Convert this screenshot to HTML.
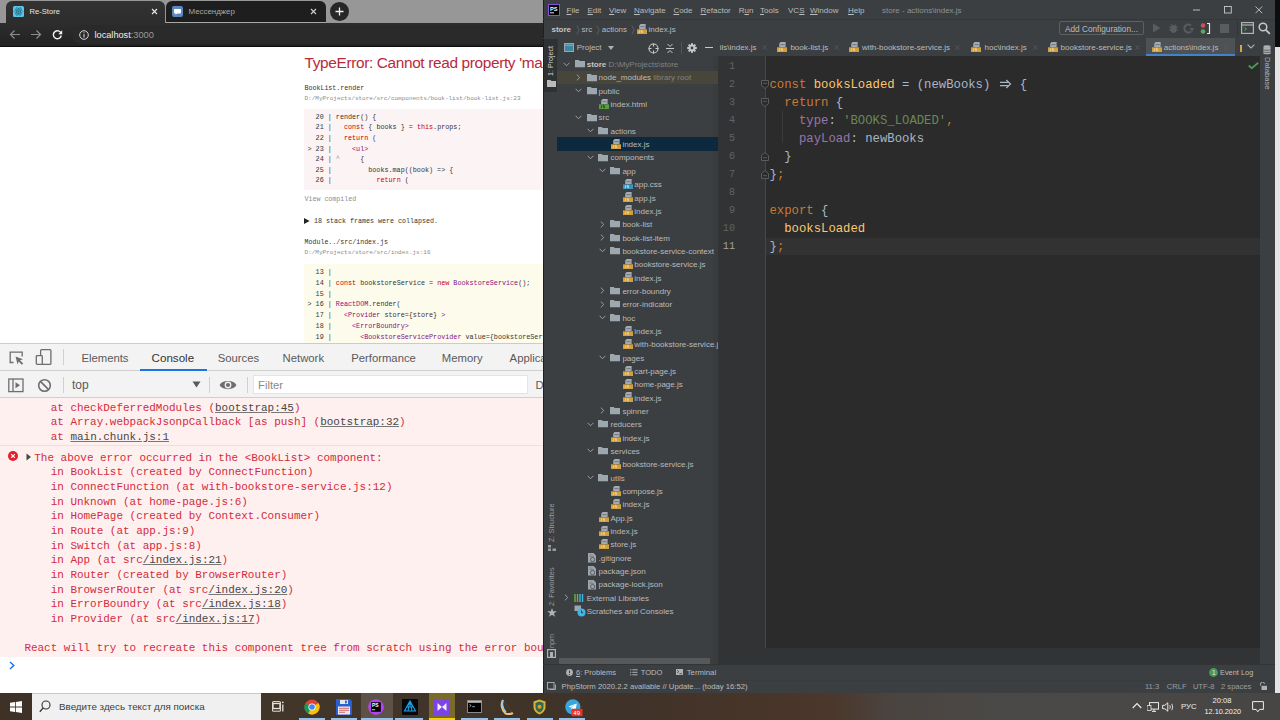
<!DOCTYPE html>
<html><head><meta charset="utf-8">
<style>
*{box-sizing:border-box;margin:0;padding:0}
html,body{width:1280px;height:720px;overflow:hidden;background:#222;font-family:"Liberation Sans",sans-serif}
.a{position:absolute;white-space:pre}
.m{font-family:"Liberation Mono",monospace}
#chrome{position:absolute;left:0;top:0;width:543px;height:693px;background:#fff;overflow:hidden}
#ide{position:absolute;left:543px;top:0;width:732px;height:693px;background:#3c3f41;overflow:hidden}
#rw{position:absolute;left:1275px;top:0;width:5px;height:693px;background:#e6e6e6}
#tb{position:absolute;left:0;top:693px;width:1280px;height:27px;background:#3d3226;overflow:hidden}
</style></head><body>
<div id="chrome">
  <!-- tab strip -->
  <div class="a" style="left:0;top:0;width:543px;height:23px;background:#979797"></div>
  <div class="a" style="left:6px;top:1px;width:159px;height:23px;background:linear-gradient(#333,#2c2c2c);border-radius:6px 6px 0 0"></div>
  <div class="a" style="left:166px;top:1px;width:160px;height:22px;background:#1e1e1e;border-radius:6px 6px 0 0;border-bottom:1px solid #a8a8a8"></div>
  <svg class="a" style="left:13px;top:6px" width="11" height="11" viewBox="0 0 11 11"><rect width="11" height="11" rx="1.5" fill="#5bc6e8"/><g fill="none" stroke="#1f6f8f" stroke-width=".7"><ellipse cx="5.5" cy="5.5" rx="4.3" ry="1.7"/><ellipse cx="5.5" cy="5.5" rx="4.3" ry="1.7" transform="rotate(60 5.5 5.5)"/><ellipse cx="5.5" cy="5.5" rx="4.3" ry="1.7" transform="rotate(120 5.5 5.5)"/></g><circle cx="5.5" cy="5.5" r=".9" fill="#1f6f8f"/></svg>
  <div class="a" style="left:29.5px;top:5.6px;font-size:7.6px;color:#e6e6e6;line-height:12px">Re-Store</div>
  <svg class="a" style="left:151px;top:8px" width="7" height="7" viewBox="0 0 7 7"><path d="M1 1L6 6M6 1L1 6" stroke="#e8e8e8" stroke-width="1.1"/></svg>
  <svg class="a" style="left:172px;top:6px" width="11" height="11" viewBox="0 0 11 11"><rect width="11" height="11" rx="2" fill="#5a87c0"/><path d="M2.6 3h5.8c.4 0 .6.2.6.6v3.2c0 .4-.2.6-.6.6H5.2L3.6 8.8V7.4h-1c-.4 0-.6-.2-.6-.6V3.6c0-.4.2-.6.6-.6z" fill="#fff"/></svg>
  <div class="a" style="left:188.5px;top:5.6px;font-size:7.9px;color:#a9a9a9;line-height:12px">Мессенджер</div>
  <svg class="a" style="left:310px;top:8px" width="7" height="7" viewBox="0 0 7 7"><path d="M1 1L6 6M6 1L1 6" stroke="#cfcfcf" stroke-width="1.1"/></svg>
  <svg class="a" style="left:329px;top:1px" width="21" height="21" viewBox="0 0 21 21"><circle cx="10.5" cy="10.5" r="9.5" fill="#262626"/><path d="M10.5 6.5v8M6.5 10.5h8" stroke="#eee" stroke-width="1.3"/></svg>
  <!-- toolbar -->
  <div class="a" style="left:0;top:23px;width:543px;height:24px;background:linear-gradient(#2d2d2d,#222);border-bottom:1px solid #0c0c0c"></div>
  <div class="a" style="left:72px;top:25px;width:480px;height:19px;background:#2a2a2a;border-radius:10px"></div>
  <svg class="a" style="left:9px;top:29px" width="12" height="11" viewBox="0 0 12 11"><path d="M11 5.5H1.5M5.5 1.5L1.5 5.5L5.5 9.5" fill="none" stroke="#8c8c8c" stroke-width="1.2"/></svg>
  <svg class="a" style="left:30px;top:29px" width="12" height="11" viewBox="0 0 12 11"><path d="M1 5.5H10.5M6.5 1.5L10.5 5.5L6.5 9.5" fill="none" stroke="#8c8c8c" stroke-width="1.2"/></svg>
  <svg class="a" style="left:52px;top:29px" width="11" height="11" viewBox="0 0 11 11"><path d="M9.2 4.6A4 4 0 1 0 9.3 6.5" fill="none" stroke="#f2f2f2" stroke-width="1.4"/><path d="M10.2 1.3V5.2H6.3Z" fill="#f2f2f2"/></svg>
  <svg class="a" style="left:79px;top:30px" width="10" height="10" viewBox="0 0 10 10"><circle cx="5" cy="5" r="4.3" fill="none" stroke="#d8d8d8" stroke-width="1"/><path d="M5 4.3v3.3" stroke="#d8d8d8" stroke-width="1.1"/><circle cx="5" cy="2.8" r=".6" fill="#d8d8d8"/></svg>
  <div class="a" style="left:94.5px;top:28.5px;font-size:9.2px;line-height:12px;color:#f0f0f0">localhost<span style="color:#9a9a9a">:3000</span></div>
  <!-- page -->
  <div class="a" style="left:0;top:47px;width:543px;height:296px;background:#fff"></div>
  <div class="a" style="left:304.5px;top:55.4px;font-size:15.4px;letter-spacing:-0.35px;line-height:16px;color:#b82a3c">TypeError: Cannot read property 'ma</div>
  <div class="a m" style="left:304.5px;top:82.5px;font-size:6.63px;line-height:10px;color:#333">BookList.render</div>
  <div class="a m" style="left:304.5px;top:94px;font-size:6px;line-height:10px;color:#878e91">D:/MyProjects/store/src/components/book-list/book-list.js:23</div>
  <div class="a" style="left:304px;top:109px;width:239px;height:81px;background:#fcf3f4"></div>
  <pre class="a m" style="left:307.5px;top:111.8px;font-size:6.75px;line-height:10.6px;color:#333">  20 | render() {
  21 |   <span style="color:#c80000">const</span> { books } = <span style="color:#c80000">this</span>.props;
  22 |   <span style="color:#c80000">return</span> (
&gt; 23 |     <span style="color:#881280">&lt;ul&gt;</span>
  24 | <span style="color:#999">^</span>     {
  25 |         books.map((book) =&gt; {
  26 |           <span style="color:#c80000">return</span> (</pre>
  <div class="a m" style="left:304.5px;top:193.7px;font-size:6.63px;line-height:10px;color:#878e91">View compiled</div>
  <svg class="a" style="left:303.8px;top:217.8px" width="6" height="6" viewBox="0 0 6 6"><path d="M0 0L5.6 3L0 6Z" fill="#222"/></svg>
  <div class="a m" style="left:314px;top:215.9px;font-size:6.68px;line-height:10px;color:#333">18 stack frames were collapsed.</div>
  <div class="a m" style="left:304.5px;top:237.3px;font-size:6.63px;line-height:10px;color:#333">Module../src/index.js</div>
  <div class="a m" style="left:304.5px;top:247.8px;font-size:6px;line-height:10px;color:#878e91">D:/MyProjects/store/src/index.js:16</div>
  <div class="a" style="left:304px;top:263.5px;width:239px;height:80px;background:#fdfbec"></div>
  <pre class="a m" style="left:307.5px;top:267.2px;font-size:6.75px;line-height:10.72px;color:#333">  13 |
  14 | <span style="color:#c80000">const</span> bookstoreService = <span style="color:#c80000">new</span> <span style="color:#881280">BookstoreService</span>();
  15 |
&gt; 16 | <span style="color:#881280">ReactDOM</span>.render(
  17 |   <span style="color:#881280">&lt;Provider</span> store={store} <span style="color:#881280">&gt;</span>
  18 |     <span style="color:#881280">&lt;ErrorBoundry&gt;</span>
  19 |       <span style="color:#881280">&lt;BookstoreServiceProvider</span> value={bookstoreService}&gt;</pre>
  <!-- devtools -->
  <div class="a" style="left:0;top:343px;width:543px;height:350px;background:#fff;border-top:1px solid #cbcbcb"></div>
  <div class="a" style="left:0;top:344px;width:543px;height:27px;background:#f3f3f3;border-bottom:1px solid #cfcfcf"></div>
  <div class="a" style="left:0;top:371px;width:543px;height:27px;background:#f3f3f3;border-bottom:1px solid #cfcfcf"></div>
  <svg class="a" style="left:9px;top:351px" width="16" height="14" viewBox="0 0 16 14"><path d="M4.5 11.5H1.2V1.2H13.2V5.5" fill="none" stroke="#6e6e6e" stroke-width="1.3"/><path d="M6.5 5.5L14 8.3L11 9.3L14.2 12.5L12.8 13.8L9.7 10.6L8.6 13.5Z" fill="#6e6e6e"/></svg>
  <svg class="a" style="left:35px;top:348px" width="18" height="18" viewBox="0 0 18 18"><rect x="5.6" y="1.6" width="10.3" height="14.8" rx="1" fill="none" stroke="#6e6e6e" stroke-width="1.3"/><rect x="1.3" y="7.6" width="6" height="8.8" rx=".8" fill="#f3f3f3" stroke="#6e6e6e" stroke-width="1.3"/></svg>
  <div class="a" style="left:62.5px;top:349px;width:1px;height:16px;background:#d0d0d0"></div>
  <div class="a" style="left:81.4px;top:351px;font-size:11.3px;line-height:14px;color:#5a5a5a">Elements</div>
  <div class="a" style="left:151.6px;top:351px;font-size:11.6px;line-height:14px;color:#333">Console</div>
  <div class="a" style="left:140px;top:369px;width:67px;height:2px;background:#1a73e8"></div>
  <div class="a" style="left:217.7px;top:351px;font-size:11.3px;line-height:14px;color:#5a5a5a">Sources</div>
  <div class="a" style="left:282.6px;top:351px;font-size:11.3px;line-height:14px;color:#5a5a5a">Network</div>
  <div class="a" style="left:351.2px;top:351px;font-size:11.3px;line-height:14px;color:#5a5a5a">Performance</div>
  <div class="a" style="left:441.8px;top:351px;font-size:11.3px;line-height:14px;color:#5a5a5a">Memory</div>
  <div class="a" style="left:509.6px;top:351px;font-size:11.3px;line-height:14px;color:#5a5a5a">Application</div>
  <svg class="a" style="left:8px;top:378px" width="16" height="15" viewBox="0 0 16 15"><rect x=".8" y="1" width="14.2" height="12.6" fill="none" stroke="#6e6e6e" stroke-width="1.3"/><path d="M5 1v12.6" stroke="#6e6e6e" stroke-width="1.3"/><path d="M7.5 4.3L12 7.3L7.5 10.3Z" fill="#6e6e6e"/></svg>
  <svg class="a" style="left:37px;top:378px" width="15" height="15" viewBox="0 0 15 15"><circle cx="7.5" cy="7.5" r="5.8" fill="none" stroke="#6e6e6e" stroke-width="1.6"/><path d="M3.6 3.6L11.4 11.4" stroke="#6e6e6e" stroke-width="1.6"/></svg>
  <div class="a" style="left:62.5px;top:377px;width:1px;height:16px;background:#d0d0d0"></div>
  <div class="a" style="left:72px;top:378px;font-size:12px;line-height:14px;color:#5a5a5a">top</div>
  <svg class="a" style="left:192px;top:381px" width="9" height="7" viewBox="0 0 9 7"><path d="M.5 .5H8.5L4.5 6.5Z" fill="#5a5a5a"/></svg>
  <div class="a" style="left:209px;top:377px;width:1px;height:16px;background:#d0d0d0"></div>
  <svg class="a" style="left:219px;top:378px" width="18" height="14" viewBox="0 0 18 14"><path d="M.6 7C3 1.5 15 1.5 17.4 7C15 12.5 3 12.5 .6 7Z" fill="#6e6e6e"/><circle cx="9" cy="7" r="3.4" fill="#f3f3f3"/><circle cx="9" cy="7" r="2.1" fill="#6e6e6e"/></svg>
  <div class="a" style="left:246.5px;top:377px;width:1px;height:16px;background:#d0d0d0"></div>
  <div class="a" style="left:253px;top:375px;width:274.5px;height:19px;background:#fff;border:1px solid #e4e4e4"></div>
  <div class="a" style="left:258px;top:378px;font-size:11.3px;line-height:14px;color:#8a8a8a">Filter</div>
  <div class="a" style="left:535.5px;top:378px;font-size:11.3px;line-height:14px;color:#5a5a5a">Default levels</div>
  <!-- console -->
  <div class="a" style="left:0;top:398px;width:543px;height:258.5px;background:#fff0f0"></div>
  <div class="a" style="left:0;top:445px;width:543px;height:1px;background:#ffd7d7"></div>
  <pre class="a m" style="left:24.4px;top:400.6px;font-size:10.96px;line-height:14.66px;color:#d22c3c">    at checkDeferredModules (<span style="color:#474747;text-decoration:underline;text-decoration-color:#777">bootstrap:45</span>)
    at Array.webpackJsonpCallback [as push] (<span style="color:#474747;text-decoration:underline;text-decoration-color:#777">bootstrap:32</span>)
    at <span style="color:#474747;text-decoration:underline;text-decoration-color:#777">main.chunk.js:1</span></pre>
  <svg class="a" style="left:7.5px;top:450.5px" width="10" height="10" viewBox="0 0 10 10"><circle cx="5" cy="5" r="5" fill="#e41e2b"/><path d="M3.1 3.1L6.9 6.9M6.9 3.1L3.1 6.9" stroke="#fff" stroke-width="1.2"/></svg>
  <svg class="a" style="left:25.5px;top:453px" width="6" height="8" viewBox="0 0 6 8"><path d="M.5 .5L5 4L.5 7.5Z" fill="#474747"/></svg>
  <pre class="a m" style="left:34.3px;top:450.6px;font-size:10.96px;line-height:14.66px;color:#d22c3c">The above error occurred in the &lt;BookList&gt; component:</pre>
  <pre class="a m" style="left:24.4px;top:465.3px;font-size:10.96px;line-height:14.66px;color:#d22c3c">    in BookList (created by ConnectFunction)
    in ConnectFunction (at with-bookstore-service.js:12)
    in Unknown (at home-page.js:6)
    in HomePage (created by Context.Consumer)
    in Route (at app.js:9)
    in Switch (at app.js:8)
    in App (at src<span style="color:#474747;text-decoration:underline;text-decoration-color:#777">/index.js:21</span>)
    in Router (created by BrowserRouter)
    in BrowserRouter (at src<span style="color:#474747;text-decoration:underline;text-decoration-color:#777">/index.js:20</span>)
    in ErrorBoundry (at src<span style="color:#474747;text-decoration:underline;text-decoration-color:#777">/index.js:18</span>)
    in Provider (at src<span style="color:#474747;text-decoration:underline;text-decoration-color:#777">/index.js:17</span>)

React will try to recreate this component tree from scratch using the error boundary you provided, ErrorBoundry.</pre>
  <svg class="a" style="left:9px;top:661px" width="6" height="9" viewBox="0 0 6 9"><path d="M1 1L4.8 4.5L1 8" fill="none" stroke="#1a73e8" stroke-width="1.4"/></svg>
</div>
<div class="a" style="left:543px;top:0px;width:732px;height:693px;background:#3c3f41"></div>
<div class="a" style="left:542.5px;top:0px;width:1.5px;height:693px;background:#1e1f20"></div>
<svg class="a" style="left:548px;top:4px" width="12" height="12" viewBox="0 0 12 12"><rect x=".5" y=".5" width="11" height="11" fill="#000" stroke="#8c4fd8" stroke-width="1"/><text x="2" y="6.6" font-family="Liberation Sans" font-weight="bold" font-size="5.6" fill="#fff">PS</text><rect x="2" y="8.4" width="4" height=".9" fill="#fff"/></svg>
<div class="a" style="left:566.5px;top:5.0px;font-size:8px;line-height:12px;color:#bbbbbb;"><span style="text-decoration:underline;text-underline-offset:1px">F</span>ile</div>
<div class="a" style="left:587.5px;top:5.0px;font-size:8px;line-height:12px;color:#bbbbbb;"><span style="text-decoration:underline;text-underline-offset:1px">E</span>dit</div>
<div class="a" style="left:609px;top:5.0px;font-size:8px;line-height:12px;color:#bbbbbb;"><span style="text-decoration:underline;text-underline-offset:1px">V</span>iew</div>
<div class="a" style="left:634px;top:5.0px;font-size:8px;line-height:12px;color:#bbbbbb;"><span style="text-decoration:underline;text-underline-offset:1px">N</span>avigate</div>
<div class="a" style="left:673.4px;top:5.0px;font-size:8px;line-height:12px;color:#bbbbbb;"><span style="text-decoration:underline;text-underline-offset:1px">C</span>ode</div>
<div class="a" style="left:700.5px;top:5.0px;font-size:8px;line-height:12px;color:#bbbbbb;"><span style="text-decoration:underline;text-underline-offset:1px">R</span>efactor</div>
<div class="a" style="left:738.7px;top:5.0px;font-size:8px;line-height:12px;color:#bbbbbb;">R<span style="text-decoration:underline;text-underline-offset:1px">u</span>n</div>
<div class="a" style="left:760px;top:5.0px;font-size:8px;line-height:12px;color:#bbbbbb;"><span style="text-decoration:underline;text-underline-offset:1px">T</span>ools</div>
<div class="a" style="left:788px;top:5.0px;font-size:8px;line-height:12px;color:#bbbbbb;">VC<span style="text-decoration:underline;text-underline-offset:1px">S</span></div>
<div class="a" style="left:810px;top:5.0px;font-size:8px;line-height:12px;color:#bbbbbb;"><span style="text-decoration:underline;text-underline-offset:1px">W</span>indow</div>
<div class="a" style="left:848px;top:5.0px;font-size:8px;line-height:12px;color:#bbbbbb;"><span style="text-decoration:underline;text-underline-offset:1px">H</span>elp</div>
<div class="a" style="left:882px;top:5.0px;font-size:8px;line-height:12px;color:#8e9194;">store - actions\index.js</div>
<svg class="a" style="left:1193px;top:8.5px" width="8" height="2" viewBox="0 0 8 2"><path d="M0 1H7" stroke="#c8c8c8" stroke-width=".9"/></svg>
<svg class="a" style="left:1224px;top:6px" width="8" height="8" viewBox="0 0 8 8"><rect x=".5" y=".5" width="6.8" height="6.5" fill="none" stroke="#c8c8c8" stroke-width=".9"/></svg>
<svg class="a" style="left:1255px;top:5.5px" width="8" height="8" viewBox="0 0 8 8"><path d="M.5 .5L7.2 7.2M7.2 .5L.5 7.2" stroke="#c8c8c8" stroke-width=".9"/></svg>
<div class="a" style="left:543px;top:19px;width:732px;height:1px;background:#343638"></div>
<div class="a" style="left:551.5px;top:24.0px;font-size:8px;line-height:12px;color:#bbbbbb;font-weight:bold;color:#c6c6c6">store</div>
<svg class="a" style="left:575.5px;top:24.5px" width="4" height="10" viewBox="0 0 4 10"><path d="M.8 .5L3.2 5L.8 9.5" fill="none" stroke="#5c5f61" stroke-width=".9"/></svg>
<div class="a" style="left:581.5px;top:23.9px;font-size:8px;line-height:12px;color:#bbbbbb;">src</div>
<svg class="a" style="left:595.5px;top:24.5px" width="4" height="10" viewBox="0 0 4 10"><path d="M.8 .5L3.2 5L.8 9.5" fill="none" stroke="#5c5f61" stroke-width=".9"/></svg>
<div class="a" style="left:601.7px;top:23.9px;font-size:8px;line-height:12px;color:#bbbbbb;">actions</div>
<svg class="a" style="left:630.5px;top:24.5px" width="4" height="10" viewBox="0 0 4 10"><path d="M.8 .5L3.2 5L.8 9.5" fill="none" stroke="#5c5f61" stroke-width=".9"/></svg>
<svg class="a" style="left:636.5px;top:23.8px" width="10" height="10" viewBox="0 0 10 10"><path d="M3.6 0H8.6V4.9H2.2V1.4Z" fill="#a4abb2"/><path d="M3.4 2.6H7.6" stroke="#5b6167" stroke-width=".7"/><rect x="0" y="5.3" width="10" height="4.7" fill="#d29f3c"/><path d="M2.6 6.3v2.4h-1M5.6 6.3h-1.4v1.2h1.4v1.2H4.2" stroke="#ecd9a4" stroke-width=".8" fill="none"/></svg>
<div class="a" style="left:648.5px;top:23.9px;font-size:8px;line-height:12px;color:#bbbbbb;">index.js</div>
<div class="a" style="left:1059.3px;top:21.2px;width:84.5px;height:14.2px;border:1px solid #5e6060;border-radius:2px;background:#3c3f41"></div>
<div class="a" style="left:1065px;top:23.5px;font-size:8.26px;line-height:12px;color:#bbbbbb;">Add Configuration...</div>
<svg class="a" style="left:1152px;top:23px" width="9" height="10" viewBox="0 0 9 10"><path d="M1 .5L8.5 5L1 9.5Z" fill="#5a5d5f"/></svg>
<svg class="a" style="left:1168px;top:23px" width="11" height="11" viewBox="0 0 11 11"><ellipse cx="5.5" cy="6" rx="3.2" ry="4" fill="#5a5d5f"/><path d="M1 4H10M1 7H10M3 1L4 2.5M8 1L7 2.5" stroke="#5a5d5f" stroke-width=".9"/></svg>
<svg class="a" style="left:1183px;top:23px" width="12" height="11" viewBox="0 0 12 11"><path d="M8 2.5A4 4 0 1 0 8 8.5" fill="none" stroke="#5a5d5f" stroke-width="2"/><path d="M6.5 5H11L9 9Z" fill="#5a5d5f"/></svg>
<svg class="a" style="left:1199px;top:22px" width="12" height="13" viewBox="0 0 12 13"><circle cx="4" cy="3.5" r="2.3" fill="#c75450"/><circle cx="4" cy="9.5" r="2.3" fill="#59a869"/><path d="M8 1.5H10.5V11.5H8" fill="none" stroke="#e8e8e8" stroke-width="1.2"/></svg>
<div class="a" style="left:1220px;top:24px;width:9px;height:9px;background:#5a5d5f"></div>
<div class="a" style="left:1237px;top:21px;width:1px;height:15px;background:#323436"></div>
<svg class="a" style="left:1241px;top:22px" width="13" height="12" viewBox="0 0 13 12"><rect x=".6" y=".6" width="11.8" height="10.8" fill="none" stroke="#afb1b3" stroke-width="1.2"/><path d="M.6 3H12.4" stroke="#afb1b3" stroke-width="1.2"/><path d="M3.5 5.5L5.5 7L3.5 8.5" fill="none" stroke="#59a869" stroke-width="1"/></svg>
<svg class="a" style="left:1258px;top:22px" width="13" height="13" viewBox="0 0 13 13"><circle cx="5" cy="5" r="3.8" fill="none" stroke="#c8c8c8" stroke-width="1.5"/><path d="M7.8 7.8L11.8 11.8" stroke="#c8c8c8" stroke-width="1.8"/></svg>
<div class="a" style="left:543px;top:37.5px;width:732px;height:1px;background:#3a3c3e"></div>
<div class="a" style="left:544px;top:38px;width:13px;height:626px;background:#3c3f41"></div>
<div class="a" style="left:557px;top:38px;width:0.8px;height:626px;background:#323436"></div>
<div class="a" style="left:544px;top:38.5px;width:13px;height:53.5px;background:#2f3133"></div>
<div class="a" style="left:545.3px;top:76px;width:40px;height:12px;transform-origin:0 0;transform:rotate(-90deg);font-size:7.1px;line-height:12px;color:#d2d2d2">1: Project</div>
<svg class="a" style="left:547px;top:80px" width="9" height="7" viewBox="0 0 9 7"><path d="M0 0H3.5L4.5 1H9V7H0Z" fill="#bbbbbb"/></svg>
<div class="a" style="left:546px;top:542px;width:50px;height:12px;transform-origin:0 0;transform:rotate(-90deg);font-size:7.4px;line-height:12px;color:#9a9da0">Z: Structure</div>
<svg class="a" style="left:548px;top:545px" width="9" height="6" viewBox="0 0 9 6"><rect x="0" y="0" width="3" height="2.5" fill="#9a9da0"/><rect x="0" y="3.5" width="3" height="2.5" fill="#9a9da0"/><rect x="4.5" y="3.5" width="3.5" height="2.5" fill="#9a9da0"/></svg>
<div class="a" style="left:546px;top:606px;width:50px;height:12px;transform-origin:0 0;transform:rotate(-90deg);font-size:7.4px;line-height:12px;color:#9a9da0">2: Favorites</div>
<svg class="a" style="left:547px;top:608px" width="10" height="9" viewBox="0 0 10 9"><path d="M5 0L6.2 3.3H9.8L6.9 5.4L8 8.8L5 6.7L2 8.8L3.1 5.4L.2 3.3H3.8Z" fill="#afb1b3"/></svg>
<div class="a" style="left:546px;top:648px;width:20px;height:12px;transform-origin:0 0;transform:rotate(-90deg);font-size:7.2px;line-height:12px;color:#9a9da0">npm</div>
<svg class="a" style="left:547px;top:649px" width="9" height="9" viewBox="0 0 9 9"><rect x=".6" y=".6" width="7.8" height="7.8" fill="none" stroke="#afb1b3" stroke-width="1.2"/><rect x="3" y="3" width="3" height="5" fill="#afb1b3"/></svg>
<svg class="a" style="left:564px;top:43px" width="10" height="9" viewBox="0 0 10 9"><rect x=".5" y=".5" width="9" height="8" fill="#3e86a0" stroke="#9aa7b0" stroke-width="1"/><path d="M.5 2.3H9.5" stroke="#9aa7b0" stroke-width="1"/></svg>
<div class="a" style="left:576.7px;top:42.2px;font-size:8px;line-height:12px;color:#bbbbbb;">Project</div>
<svg class="a" style="left:607.5px;top:46px" width="6" height="4" viewBox="0 0 6 4"><path d="M0 0H6L3 4Z" fill="#afb1b3"/></svg>
<svg class="a" style="left:647.5px;top:42.5px" width="11" height="11" viewBox="0 0 11 11"><circle cx="5.5" cy="5.5" r="4.5" fill="none" stroke="#c8c8c8" stroke-width="1.1"/><path d="M5.5 .5V3.5M5.5 7.5V10.5M.5 5.5H3.5M7.5 5.5H10.5" stroke="#c8c8c8" stroke-width="1.1"/></svg>
<svg class="a" style="left:666px;top:42.5px" width="8" height="11" viewBox="0 0 8 11"><path d="M0 5.5H8" stroke="#c8c8c8" stroke-width="1"/><path d="M1.5 1L4 3.5L6.5 1M1.5 10L4 7.5L6.5 10" fill="none" stroke="#c8c8c8" stroke-width="1"/></svg>
<div class="a" style="left:680.5px;top:42px;width:1px;height:12px;background:#515658"></div>
<svg class="a" style="left:687px;top:42.5px" width="10" height="10" viewBox="0 0 10 10"><g fill="#c8c8c8"><circle cx="5" cy="5" r="3.4"/><rect x="4" y=".2" width="2" height="9.6"/><rect x=".2" y="4" width="9.6" height="2"/><rect x="4" y=".2" width="2" height="9.6" transform="rotate(45 5 5)"/><rect x="4" y=".2" width="2" height="9.6" transform="rotate(-45 5 5)"/></g><circle cx="5" cy="5" r="1.4" fill="#3c3f41"/></svg>
<div class="a" style="left:705px;top:47px;width:8px;height:1.2px;background:#c8c8c8"></div>
<div class="a" style="left:718px;top:38px;width:541px;height:18px;background:#3c3f41"></div>
<div class="a" style="left:1145.8px;top:38px;width:89.2px;height:18px;background:#4e5254"></div>
<div class="a" style="left:1145.8px;top:54.3px;width:89.2px;height:1.7px;background:#4083c9"></div>
<div class="a" style="left:719.7px;top:42.2px;font-size:8px;line-height:12px;color:#bbbbbb;">ils\index.js</div>
<svg class="a" style="left:761.9px;top:45px" width="5" height="5" viewBox="0 0 5 5"><path d="M.5 .5L4.5 4.5M4.5 .5L.5 4.5" stroke="#5a5d60" stroke-width=".8"/></svg>
<svg class="a" style="left:777px;top:41.5px" width="10" height="10" viewBox="0 0 10 10"><path d="M3.6 0H8.6V4.9H2.2V1.4Z" fill="#a4abb2"/><path d="M3.4 2.6H7.6" stroke="#5b6167" stroke-width=".7"/><rect x="0" y="5.3" width="10" height="4.7" fill="#d29f3c"/><path d="M2.6 6.3v2.4h-1M5.6 6.3h-1.4v1.2h1.4v1.2H4.2" stroke="#ecd9a4" stroke-width=".8" fill="none"/></svg>
<div class="a" style="left:790.4px;top:42.2px;font-size:8px;line-height:12px;color:#bbbbbb;">book-list.js</div>
<svg class="a" style="left:834.1px;top:45px" width="5" height="5" viewBox="0 0 5 5"><path d="M.5 .5L4.5 4.5M4.5 .5L.5 4.5" stroke="#5a5d60" stroke-width=".8"/></svg>
<svg class="a" style="left:849px;top:41.5px" width="10" height="10" viewBox="0 0 10 10"><path d="M3.6 0H8.6V4.9H2.2V1.4Z" fill="#a4abb2"/><path d="M3.4 2.6H7.6" stroke="#5b6167" stroke-width=".7"/><rect x="0" y="5.3" width="10" height="4.7" fill="#d29f3c"/><path d="M2.6 6.3v2.4h-1M5.6 6.3h-1.4v1.2h1.4v1.2H4.2" stroke="#ecd9a4" stroke-width=".8" fill="none"/></svg>
<div class="a" style="left:862.1px;top:42.2px;font-size:8px;line-height:12px;color:#bbbbbb;">with-bookstore-service.js</div>
<svg class="a" style="left:955.3px;top:45px" width="5" height="5" viewBox="0 0 5 5"><path d="M.5 .5L4.5 4.5M4.5 .5L.5 4.5" stroke="#5a5d60" stroke-width=".8"/></svg>
<svg class="a" style="left:971px;top:41.5px" width="10" height="10" viewBox="0 0 10 10"><path d="M3.6 0H8.6V4.9H2.2V1.4Z" fill="#a4abb2"/><path d="M3.4 2.6H7.6" stroke="#5b6167" stroke-width=".7"/><rect x="0" y="5.3" width="10" height="4.7" fill="#d29f3c"/><path d="M2.6 6.3v2.4h-1M5.6 6.3h-1.4v1.2h1.4v1.2H4.2" stroke="#ecd9a4" stroke-width=".8" fill="none"/></svg>
<div class="a" style="left:984.5px;top:42.2px;font-size:8px;line-height:12px;color:#bbbbbb;">hoc\index.js</div>
<svg class="a" style="left:1032.5px;top:45px" width="5" height="5" viewBox="0 0 5 5"><path d="M.5 .5L4.5 4.5M4.5 .5L.5 4.5" stroke="#5a5d60" stroke-width=".8"/></svg>
<svg class="a" style="left:1048.3px;top:41.5px" width="10" height="10" viewBox="0 0 10 10"><path d="M3.6 0H8.6V4.9H2.2V1.4Z" fill="#a4abb2"/><path d="M3.4 2.6H7.6" stroke="#5b6167" stroke-width=".7"/><rect x="0" y="5.3" width="10" height="4.7" fill="#d29f3c"/><path d="M2.6 6.3v2.4h-1M5.6 6.3h-1.4v1.2h1.4v1.2H4.2" stroke="#ecd9a4" stroke-width=".8" fill="none"/></svg>
<div class="a" style="left:1060.6px;top:42.2px;font-size:8px;line-height:12px;color:#bbbbbb;">bookstore-service.js</div>
<svg class="a" style="left:1135.0px;top:45px" width="5" height="5" viewBox="0 0 5 5"><path d="M.5 .5L4.5 4.5M4.5 .5L.5 4.5" stroke="#5a5d60" stroke-width=".8"/></svg>
<svg class="a" style="left:1151.8px;top:41.5px" width="10" height="10" viewBox="0 0 10 10"><path d="M3.6 0H8.6V4.9H2.2V1.4Z" fill="#a4abb2"/><path d="M3.4 2.6H7.6" stroke="#5b6167" stroke-width=".7"/><rect x="0" y="5.3" width="10" height="4.7" fill="#d29f3c"/><path d="M2.6 6.3v2.4h-1M5.6 6.3h-1.4v1.2h1.4v1.2H4.2" stroke="#ecd9a4" stroke-width=".8" fill="none"/></svg>
<div class="a" style="left:1163.7px;top:42.2px;font-size:8px;line-height:12px;color:#bbbbbb;">actions\index.js</div>
<svg class="a" style="left:1224.1px;top:45px" width="5" height="5" viewBox="0 0 5 5"><path d="M.5 .5L4.5 4.5M4.5 .5L.5 4.5" stroke="#5a5d60" stroke-width=".8"/></svg>
<div class="a" style="left:1240px;top:45px;width:1.6px;height:7px;background:#d9a343"></div>
<svg class="a" style="left:1247px;top:44px" width="8" height="5" viewBox="0 0 8 5"><path d="M.6 .6L4 4L7.4 .6" fill="none" stroke="#afb1b3" stroke-width="1.1"/></svg>
<div class="a" style="left:718px;top:56px;width:48px;height:592px;background:#313335"></div>
<div class="a" style="left:764.5px;top:56px;width:1px;height:592px;background:#45474a"></div>
<div class="a" style="left:766px;top:56px;width:493.5px;height:592px;background:#2b2b2b"></div>
<div class="a" style="left:766px;top:237.5px;width:493.5px;height:17px;background:#323232"></div>
<div class="a" style="left:718px;top:648px;width:541.5px;height:16px;background:#313335"></div>
<pre class="a m" style="left:769.5px;top:58px;font-size:12.27px;line-height:18px;color:#a9b7c6">

<span style="color:#cc7832">const</span> <span style="color:#ffc66d">booksLoaded</span> = (newBooks) <svg style="display:inline-block;vertical-align:-1px" width="14.72" height="10" viewBox="0 0 14.72 10"><path d="M2 3.3H10.5M2 6.7H10.5" stroke="#a9b7c6" stroke-width="1.2"/><path d="M8.3 1L12.5 5L8.3 9" fill="none" stroke="#a9b7c6" stroke-width="1.2"/></svg> {
  <span style="color:#cc7832">return</span> {
    <span style="color:#9876aa">type</span>: <span style="color:#6a8759">'BOOKS_LOADED'</span><span style="color:#cc7832">,</span>
    <span style="color:#9876aa">payLoad</span>: newBooks
  }
}<span style="color:#cc7832">;</span>

<span style="color:#cc7832">export</span> {
  <span style="color:#ffc66d">booksLoaded</span>
}<span style="color:#cc7832">;</span></pre>
<pre class="a m" style="left:699px;top:58.3px;width:36px;text-align:right;font-size:10.2px;line-height:18px;color:#606366">1
2
3
4
5
6
7
8
9
10
<span style="color:#a4a3a3">11</span></pre>
<svg class="a" style="left:761px;top:79.5px" width="8" height="9" viewBox="0 0 8 9"><path d="M.5 .5H7.5V5.5L4 8.5L.5 5.5Z" fill="#2b2b2b" stroke="#66686a" stroke-width=".8"/><path d="M2 3.3H6" stroke="#66686a" stroke-width=".8"/></svg>
<svg class="a" style="left:761px;top:97.5px" width="8" height="9" viewBox="0 0 8 9"><path d="M.5 .5H7.5V5.5L4 8.5L.5 5.5Z" fill="#2b2b2b" stroke="#66686a" stroke-width=".8"/><path d="M2 3.3H6" stroke="#66686a" stroke-width=".8"/></svg>
<svg class="a" style="left:761px;top:151.5px" width="8" height="9" viewBox="0 0 8 9"><path d="M.5 8.5H7.5V3.5L4 .5L.5 3.5Z" fill="#2b2b2b" stroke="#66686a" stroke-width=".8"/><path d="M2 5.7H6" stroke="#66686a" stroke-width=".8"/></svg>
<svg class="a" style="left:761px;top:169.5px" width="8" height="9" viewBox="0 0 8 9"><path d="M.5 8.5H7.5V3.5L4 .5L.5 3.5Z" fill="#2b2b2b" stroke="#66686a" stroke-width=".8"/><path d="M2 5.7H6" stroke="#66686a" stroke-width=".8"/></svg>
<div class="a" style="left:782px;top:111px;width:0.8px;height:32px;background:#3b3b3b"></div>
<svg class="a" style="left:1248px;top:62px" width="11" height="7" viewBox="0 0 11 7"><path d="M.8 3.5L3.8 6.2L10.2 .8" fill="none" stroke="#499c54" stroke-width="1.8"/></svg>
<div class="a" style="left:1259.5px;top:38px;width:0.8px;height:626px;background:#323436"></div>
<div class="a" style="left:1260.3px;top:38px;width:14.7px;height:626px;background:#3c3f41"></div>
<svg class="a" style="left:1263px;top:45px" width="8" height="10" viewBox="0 0 8 10"><ellipse cx="4" cy="1.6" rx="3.6" ry="1.4" fill="#afb1b3"/><path d="M.4 2.2V8.6C.4 9.6 7.6 9.6 7.6 8.6V2.2" fill="#afb1b3"/><path d="M.4 4.5C.4 5.5 7.6 5.5 7.6 4.5M.4 6.7C.4 7.7 7.6 7.7 7.6 6.7" fill="none" stroke="#3c3f41" stroke-width=".7"/></svg>
<div class="a" style="left:1273px;top:57px;width:40px;height:12px;transform-origin:0 0;transform:rotate(90deg);font-size:7.6px;line-height:12px;color:#afb1b3">Database</div>
<div class="a" style="left:558.8px;top:658px;width:151px;height:5.5px;background:#4f5254;border-radius:1px"></div>
<div class="a" style="left:543px;top:664px;width:732px;height:0.8px;background:#323436"></div>
<svg class="a" style="left:565.5px;top:668.8px" width="7" height="7" viewBox="0 0 7 7"><circle cx="3.5" cy="3.5" r="3.4" fill="#afb1b3"/><path d="M3.5 1.5V4" stroke="#3c3f41" stroke-width="1"/><circle cx="3.5" cy="5.3" r=".6" fill="#3c3f41"/></svg>
<div class="a" style="left:576px;top:667.0px;font-size:7.5px;line-height:12px;color:#bbbbbb;"><span style="text-decoration:underline">6</span>: Problems</div>
<svg class="a" style="left:630px;top:669px" width="7.5" height="7" viewBox="0 0 7.5 7"><path d="M0 .8H1.3M0 3.3H1.3M0 5.8H1.3M2.3 .8H7.5M2.3 3.3H7.5M2.3 5.8H7.5" stroke="#afb1b3" stroke-width="1"/></svg>
<div class="a" style="left:640.7px;top:667.0px;font-size:7.6px;line-height:12px;color:#bbbbbb;">TODO</div>
<svg class="a" style="left:675.7px;top:669.3px" width="7.6" height="6" viewBox="0 0 7.6 6"><rect x="0" y="0" width="7.6" height="6" fill="#afb1b3"/><path d="M1.2 1.3L2.8 2.6L1.2 3.9M3.4 4.7H6" fill="none" stroke="#3c3f41" stroke-width=".8"/></svg>
<div class="a" style="left:686.7px;top:667.0px;font-size:7.8px;line-height:12px;color:#bbbbbb;">Terminal</div>
<svg class="a" style="left:1208.5px;top:668.3px" width="9" height="9" viewBox="0 0 9 9"><circle cx="4.5" cy="4.5" r="4.4" fill="#499c54"/><text x="2.9" y="7" font-family="Liberation Sans" font-size="6.5" fill="#e8e8e8">1</text></svg>
<div class="a" style="left:1220px;top:667.0px;font-size:7.4px;line-height:12px;color:#bbbbbb;">Event Log</div>
<div class="a" style="left:543px;top:679.5px;width:732px;height:0.6px;background:#393b3d"></div>
<svg class="a" style="left:546.5px;top:682px" width="9" height="8" viewBox="0 0 9 8"><rect x=".5" y=".5" width="6.5" height="6.5" fill="none" stroke="#afb1b3" stroke-width=".9"/><path d="M2.5 7.5H8.5V2.5" fill="none" stroke="#afb1b3" stroke-width=".9"/></svg>
<div class="a" style="left:561.6px;top:680.6px;font-size:7.7px;line-height:12px;color:#bbbbbb;">PhpStorm 2020.2.2 available // Update... (today 16:52)</div>
<div class="a" style="left:1144.9px;top:680.9px;font-size:7.6px;line-height:12px;color:#9a9da0;">11:3</div>
<div class="a" style="left:1166.7px;top:680.9px;font-size:7.6px;line-height:12px;color:#9a9da0;">CRLF</div>
<div class="a" style="left:1192.9px;top:680.9px;font-size:7.6px;line-height:12px;color:#9a9da0;">UTF-8</div>
<div class="a" style="left:1221px;top:680.9px;font-size:7.6px;line-height:12px;color:#9a9da0;">2 spaces</div>
<svg class="a" style="left:1258.5px;top:682px" width="8" height="8" viewBox="0 0 8 8"><path d="M1.5 3.5V2A2 2 0 0 1 5.5 2" fill="none" stroke="#afb1b3" stroke-width="1"/><rect x="2.5" y="3.8" width="5.5" height="4.2" fill="#afb1b3"/></svg>
<div class="a" style="left:0;top:0;width:718px;height:664px;overflow:hidden"><div class="a" style="left:557px;top:56px;width:161px;height:608px;background:#3c3f41"></div>
<div class="a" style="left:713px;top:56px;width:5px;height:608px;background:#393b3d"></div>
<div class="a" style="left:558.8px;top:657.5px;width:151px;height:6px;background:#56585a;border-radius:1px"></div>
<div class="a" style="left:557px;top:70.74px;width:161px;height:13.3px;background:#48463b"></div>
<div class="a" style="left:557px;top:137.04px;width:161px;height:13.6px;background:#0d293e"></div>
<svg class="a" style="left:562.9px;top:61.5px" width="7" height="5" viewBox="0 0 7 5"><path d="M.6 .8L3.5 3.8L6.4 .8" fill="none" stroke="#9a9da0" stroke-width="1"/></svg>
<svg class="a" style="left:574.6px;top:60.2px" width="10" height="8" viewBox="0 0 10 8"><path d="M0 0H3.8L4.8 1.1H10V7.2H0Z" fill="#9ca7ae"/></svg>
<div class="a" style="left:586.7px;top:58.1px;font-size:8px;line-height:13.34px;color:#bbbbbb"><b style="color:#c4c4c4">store</b> <span style="color:#7f8285">D:\MyProjects\store</span></div>
<svg class="a" style="left:575.8px;top:73.84px" width="5" height="7" viewBox="0 0 5 7"><path d="M.8 .6L3.8 3.5L.8 6.4" fill="none" stroke="#9a9da0" stroke-width="1"/></svg>
<svg class="a" style="left:586.5px;top:73.54px" width="10" height="8" viewBox="0 0 10 8"><path d="M0 0H3.8L4.8 1.1H10V7.2H0Z" fill="#9ca7ae"/></svg>
<div class="a" style="left:598.6px;top:71.44px;font-size:8px;line-height:13.34px;color:#bbbbbb">node_modules <span style="color:#7f8285">library root</span></div>
<svg class="a" style="left:574.8px;top:88.18px" width="7" height="5" viewBox="0 0 7 5"><path d="M.6 .8L3.5 3.8L6.4 .8" fill="none" stroke="#9a9da0" stroke-width="1"/></svg>
<svg class="a" style="left:586.5px;top:86.88px" width="10" height="8" viewBox="0 0 10 8"><path d="M0 0H3.8L4.8 1.1H10V7.2H0Z" fill="#9ca7ae"/></svg>
<div class="a" style="left:598.6px;top:84.78px;font-size:8px;line-height:13.34px;color:#bbbbbb">public</div>
<svg class="a" style="left:599.1px;top:98.72px" width="10" height="10" viewBox="0 0 10 10"><path d="M3.6 0H8.6V4.9H2.2V1.4Z" fill="#a4abb2"/><path d="M3.4 2.6H7.6" stroke="#5b6167" stroke-width=".7"/><rect x="0" y="5.3" width="10" height="4.7" fill="#5a9f3e"/><path d="M2.6 6.3v2.4h-1M5.6 6.3h-1.4v1.2h1.4v1.2H4.2" stroke="#2d3b26" stroke-width=".8" fill="none"/></svg>
<div class="a" style="left:610.5px;top:98.12px;font-size:8px;line-height:13.34px;color:#bbbbbb">index.html</div>
<svg class="a" style="left:574.8px;top:114.86px" width="7" height="5" viewBox="0 0 7 5"><path d="M.6 .8L3.5 3.8L6.4 .8" fill="none" stroke="#9a9da0" stroke-width="1"/></svg>
<svg class="a" style="left:586.5px;top:113.56px" width="10" height="8" viewBox="0 0 10 8"><path d="M0 0H3.8L4.8 1.1H10V7.2H0Z" fill="#9ca7ae"/></svg>
<div class="a" style="left:598.6px;top:111.46px;font-size:8px;line-height:13.34px;color:#bbbbbb">src</div>
<svg class="a" style="left:586.7px;top:128.2px" width="7" height="5" viewBox="0 0 7 5"><path d="M.6 .8L3.5 3.8L6.4 .8" fill="none" stroke="#9a9da0" stroke-width="1"/></svg>
<svg class="a" style="left:598.4px;top:126.9px" width="10" height="8" viewBox="0 0 10 8"><path d="M0 0H3.8L4.8 1.1H10V7.2H0Z" fill="#9ca7ae"/></svg>
<div class="a" style="left:610.5px;top:124.8px;font-size:8px;line-height:13.34px;color:#bbbbbb">actions</div>
<svg class="a" style="left:611.0px;top:138.74px" width="10" height="10" viewBox="0 0 10 10"><path d="M3.6 0H8.6V4.9H2.2V1.4Z" fill="#a4abb2"/><path d="M3.4 2.6H7.6" stroke="#5b6167" stroke-width=".7"/><rect x="0" y="5.3" width="10" height="4.7" fill="#d29f3c"/><path d="M2.6 6.3v2.4h-1M5.6 6.3h-1.4v1.2h1.4v1.2H4.2" stroke="#ecd9a4" stroke-width=".8" fill="none"/></svg>
<div class="a" style="left:622.4px;top:138.14px;font-size:8px;line-height:13.34px;color:#bbbbbb">index.js</div>
<svg class="a" style="left:586.7px;top:154.88px" width="7" height="5" viewBox="0 0 7 5"><path d="M.6 .8L3.5 3.8L6.4 .8" fill="none" stroke="#9a9da0" stroke-width="1"/></svg>
<svg class="a" style="left:598.4px;top:153.58px" width="10" height="8" viewBox="0 0 10 8"><path d="M0 0H3.8L4.8 1.1H10V7.2H0Z" fill="#9ca7ae"/></svg>
<div class="a" style="left:610.5px;top:151.48px;font-size:8px;line-height:13.34px;color:#bbbbbb">components</div>
<svg class="a" style="left:598.6px;top:168.22px" width="7" height="5" viewBox="0 0 7 5"><path d="M.6 .8L3.5 3.8L6.4 .8" fill="none" stroke="#9a9da0" stroke-width="1"/></svg>
<svg class="a" style="left:610.3px;top:166.92px" width="10" height="8" viewBox="0 0 10 8"><path d="M0 0H3.8L4.8 1.1H10V7.2H0Z" fill="#9ca7ae"/></svg>
<div class="a" style="left:622.4px;top:164.82px;font-size:8px;line-height:13.34px;color:#bbbbbb">app</div>
<svg class="a" style="left:622.9px;top:178.76px" width="10" height="10" viewBox="0 0 10 10"><path d="M3.6 0H8.6V4.9H2.2V1.4Z" fill="#a4abb2"/><path d="M3.4 2.6H7.6" stroke="#5b6167" stroke-width=".7"/><rect x="0" y="5.3" width="10" height="4.7" fill="#3d92b8"/><path d="M2.6 6.3v2.4h-1M5.6 6.3h-1.4v1.2h1.4v1.2H4.2" stroke="#d0e8f2" stroke-width=".8" fill="none"/></svg>
<div class="a" style="left:634.3px;top:178.16px;font-size:8px;line-height:13.34px;color:#bbbbbb">app.css</div>
<svg class="a" style="left:622.9px;top:192.1px" width="10" height="10" viewBox="0 0 10 10"><path d="M3.6 0H8.6V4.9H2.2V1.4Z" fill="#a4abb2"/><path d="M3.4 2.6H7.6" stroke="#5b6167" stroke-width=".7"/><rect x="0" y="5.3" width="10" height="4.7" fill="#d29f3c"/><path d="M2.6 6.3v2.4h-1M5.6 6.3h-1.4v1.2h1.4v1.2H4.2" stroke="#ecd9a4" stroke-width=".8" fill="none"/></svg>
<div class="a" style="left:634.3px;top:191.5px;font-size:8px;line-height:13.34px;color:#bbbbbb">app.js</div>
<svg class="a" style="left:622.9px;top:205.44px" width="10" height="10" viewBox="0 0 10 10"><path d="M3.6 0H8.6V4.9H2.2V1.4Z" fill="#a4abb2"/><path d="M3.4 2.6H7.6" stroke="#5b6167" stroke-width=".7"/><rect x="0" y="5.3" width="10" height="4.7" fill="#d29f3c"/><path d="M2.6 6.3v2.4h-1M5.6 6.3h-1.4v1.2h1.4v1.2H4.2" stroke="#ecd9a4" stroke-width=".8" fill="none"/></svg>
<div class="a" style="left:634.3px;top:204.84px;font-size:8px;line-height:13.34px;color:#bbbbbb">index.js</div>
<svg class="a" style="left:599.6px;top:220.58px" width="5" height="7" viewBox="0 0 5 7"><path d="M.8 .6L3.8 3.5L.8 6.4" fill="none" stroke="#9a9da0" stroke-width="1"/></svg>
<svg class="a" style="left:610.3px;top:220.28px" width="10" height="8" viewBox="0 0 10 8"><path d="M0 0H3.8L4.8 1.1H10V7.2H0Z" fill="#9ca7ae"/></svg>
<div class="a" style="left:622.4px;top:218.18px;font-size:8px;line-height:13.34px;color:#bbbbbb">book-list</div>
<svg class="a" style="left:599.6px;top:233.92px" width="5" height="7" viewBox="0 0 5 7"><path d="M.8 .6L3.8 3.5L.8 6.4" fill="none" stroke="#9a9da0" stroke-width="1"/></svg>
<svg class="a" style="left:610.3px;top:233.62px" width="10" height="8" viewBox="0 0 10 8"><path d="M0 0H3.8L4.8 1.1H10V7.2H0Z" fill="#9ca7ae"/></svg>
<div class="a" style="left:622.4px;top:231.52px;font-size:8px;line-height:13.34px;color:#bbbbbb">book-list-item</div>
<svg class="a" style="left:598.6px;top:248.26px" width="7" height="5" viewBox="0 0 7 5"><path d="M.6 .8L3.5 3.8L6.4 .8" fill="none" stroke="#9a9da0" stroke-width="1"/></svg>
<svg class="a" style="left:610.3px;top:246.96px" width="10" height="8" viewBox="0 0 10 8"><path d="M0 0H3.8L4.8 1.1H10V7.2H0Z" fill="#9ca7ae"/></svg>
<div class="a" style="left:622.4px;top:244.86px;font-size:8px;line-height:13.34px;color:#bbbbbb">bookstore-service-context</div>
<svg class="a" style="left:622.9px;top:258.8px" width="10" height="10" viewBox="0 0 10 10"><path d="M3.6 0H8.6V4.9H2.2V1.4Z" fill="#a4abb2"/><path d="M3.4 2.6H7.6" stroke="#5b6167" stroke-width=".7"/><rect x="0" y="5.3" width="10" height="4.7" fill="#d29f3c"/><path d="M2.6 6.3v2.4h-1M5.6 6.3h-1.4v1.2h1.4v1.2H4.2" stroke="#ecd9a4" stroke-width=".8" fill="none"/></svg>
<div class="a" style="left:634.3px;top:258.2px;font-size:8px;line-height:13.34px;color:#bbbbbb">bookstore-service.js</div>
<svg class="a" style="left:622.9px;top:272.14px" width="10" height="10" viewBox="0 0 10 10"><path d="M3.6 0H8.6V4.9H2.2V1.4Z" fill="#a4abb2"/><path d="M3.4 2.6H7.6" stroke="#5b6167" stroke-width=".7"/><rect x="0" y="5.3" width="10" height="4.7" fill="#d29f3c"/><path d="M2.6 6.3v2.4h-1M5.6 6.3h-1.4v1.2h1.4v1.2H4.2" stroke="#ecd9a4" stroke-width=".8" fill="none"/></svg>
<div class="a" style="left:634.3px;top:271.54px;font-size:8px;line-height:13.34px;color:#bbbbbb">index.js</div>
<svg class="a" style="left:599.6px;top:287.28px" width="5" height="7" viewBox="0 0 5 7"><path d="M.8 .6L3.8 3.5L.8 6.4" fill="none" stroke="#9a9da0" stroke-width="1"/></svg>
<svg class="a" style="left:610.3px;top:286.98px" width="10" height="8" viewBox="0 0 10 8"><path d="M0 0H3.8L4.8 1.1H10V7.2H0Z" fill="#9ca7ae"/></svg>
<div class="a" style="left:622.4px;top:284.88px;font-size:8px;line-height:13.34px;color:#bbbbbb">error-boundry</div>
<svg class="a" style="left:599.6px;top:300.62px" width="5" height="7" viewBox="0 0 5 7"><path d="M.8 .6L3.8 3.5L.8 6.4" fill="none" stroke="#9a9da0" stroke-width="1"/></svg>
<svg class="a" style="left:610.3px;top:300.32px" width="10" height="8" viewBox="0 0 10 8"><path d="M0 0H3.8L4.8 1.1H10V7.2H0Z" fill="#9ca7ae"/></svg>
<div class="a" style="left:622.4px;top:298.22px;font-size:8px;line-height:13.34px;color:#bbbbbb">error-indicator</div>
<svg class="a" style="left:598.6px;top:314.96px" width="7" height="5" viewBox="0 0 7 5"><path d="M.6 .8L3.5 3.8L6.4 .8" fill="none" stroke="#9a9da0" stroke-width="1"/></svg>
<svg class="a" style="left:610.3px;top:313.66px" width="10" height="8" viewBox="0 0 10 8"><path d="M0 0H3.8L4.8 1.1H10V7.2H0Z" fill="#9ca7ae"/></svg>
<div class="a" style="left:622.4px;top:311.56px;font-size:8px;line-height:13.34px;color:#bbbbbb">hoc</div>
<svg class="a" style="left:622.9px;top:325.5px" width="10" height="10" viewBox="0 0 10 10"><path d="M3.6 0H8.6V4.9H2.2V1.4Z" fill="#a4abb2"/><path d="M3.4 2.6H7.6" stroke="#5b6167" stroke-width=".7"/><rect x="0" y="5.3" width="10" height="4.7" fill="#d29f3c"/><path d="M2.6 6.3v2.4h-1M5.6 6.3h-1.4v1.2h1.4v1.2H4.2" stroke="#ecd9a4" stroke-width=".8" fill="none"/></svg>
<div class="a" style="left:634.3px;top:324.9px;font-size:8px;line-height:13.34px;color:#bbbbbb">index.js</div>
<svg class="a" style="left:622.9px;top:338.84px" width="10" height="10" viewBox="0 0 10 10"><path d="M3.6 0H8.6V4.9H2.2V1.4Z" fill="#a4abb2"/><path d="M3.4 2.6H7.6" stroke="#5b6167" stroke-width=".7"/><rect x="0" y="5.3" width="10" height="4.7" fill="#d29f3c"/><path d="M2.6 6.3v2.4h-1M5.6 6.3h-1.4v1.2h1.4v1.2H4.2" stroke="#ecd9a4" stroke-width=".8" fill="none"/></svg>
<div class="a" style="left:634.3px;top:338.24px;font-size:8px;line-height:13.34px;color:#bbbbbb">with-bookstore-service.js</div>
<svg class="a" style="left:598.6px;top:354.98px" width="7" height="5" viewBox="0 0 7 5"><path d="M.6 .8L3.5 3.8L6.4 .8" fill="none" stroke="#9a9da0" stroke-width="1"/></svg>
<svg class="a" style="left:610.3px;top:353.68px" width="10" height="8" viewBox="0 0 10 8"><path d="M0 0H3.8L4.8 1.1H10V7.2H0Z" fill="#9ca7ae"/></svg>
<div class="a" style="left:622.4px;top:351.58px;font-size:8px;line-height:13.34px;color:#bbbbbb">pages</div>
<svg class="a" style="left:622.9px;top:365.52px" width="10" height="10" viewBox="0 0 10 10"><path d="M3.6 0H8.6V4.9H2.2V1.4Z" fill="#a4abb2"/><path d="M3.4 2.6H7.6" stroke="#5b6167" stroke-width=".7"/><rect x="0" y="5.3" width="10" height="4.7" fill="#d29f3c"/><path d="M2.6 6.3v2.4h-1M5.6 6.3h-1.4v1.2h1.4v1.2H4.2" stroke="#ecd9a4" stroke-width=".8" fill="none"/></svg>
<div class="a" style="left:634.3px;top:364.92px;font-size:8px;line-height:13.34px;color:#bbbbbb">cart-page.js</div>
<svg class="a" style="left:622.9px;top:378.86px" width="10" height="10" viewBox="0 0 10 10"><path d="M3.6 0H8.6V4.9H2.2V1.4Z" fill="#a4abb2"/><path d="M3.4 2.6H7.6" stroke="#5b6167" stroke-width=".7"/><rect x="0" y="5.3" width="10" height="4.7" fill="#d29f3c"/><path d="M2.6 6.3v2.4h-1M5.6 6.3h-1.4v1.2h1.4v1.2H4.2" stroke="#ecd9a4" stroke-width=".8" fill="none"/></svg>
<div class="a" style="left:634.3px;top:378.26px;font-size:8px;line-height:13.34px;color:#bbbbbb">home-page.js</div>
<svg class="a" style="left:622.9px;top:392.2px" width="10" height="10" viewBox="0 0 10 10"><path d="M3.6 0H8.6V4.9H2.2V1.4Z" fill="#a4abb2"/><path d="M3.4 2.6H7.6" stroke="#5b6167" stroke-width=".7"/><rect x="0" y="5.3" width="10" height="4.7" fill="#d29f3c"/><path d="M2.6 6.3v2.4h-1M5.6 6.3h-1.4v1.2h1.4v1.2H4.2" stroke="#ecd9a4" stroke-width=".8" fill="none"/></svg>
<div class="a" style="left:634.3px;top:391.6px;font-size:8px;line-height:13.34px;color:#bbbbbb">index.js</div>
<svg class="a" style="left:599.6px;top:407.34px" width="5" height="7" viewBox="0 0 5 7"><path d="M.8 .6L3.8 3.5L.8 6.4" fill="none" stroke="#9a9da0" stroke-width="1"/></svg>
<svg class="a" style="left:610.3px;top:407.04px" width="10" height="8" viewBox="0 0 10 8"><path d="M0 0H3.8L4.8 1.1H10V7.2H0Z" fill="#9ca7ae"/></svg>
<div class="a" style="left:622.4px;top:404.94px;font-size:8px;line-height:13.34px;color:#bbbbbb">spinner</div>
<svg class="a" style="left:586.7px;top:421.68px" width="7" height="5" viewBox="0 0 7 5"><path d="M.6 .8L3.5 3.8L6.4 .8" fill="none" stroke="#9a9da0" stroke-width="1"/></svg>
<svg class="a" style="left:598.4px;top:420.38px" width="10" height="8" viewBox="0 0 10 8"><path d="M0 0H3.8L4.8 1.1H10V7.2H0Z" fill="#9ca7ae"/></svg>
<div class="a" style="left:610.5px;top:418.28px;font-size:8px;line-height:13.34px;color:#bbbbbb">reducers</div>
<svg class="a" style="left:611.0px;top:432.22px" width="10" height="10" viewBox="0 0 10 10"><path d="M3.6 0H8.6V4.9H2.2V1.4Z" fill="#a4abb2"/><path d="M3.4 2.6H7.6" stroke="#5b6167" stroke-width=".7"/><rect x="0" y="5.3" width="10" height="4.7" fill="#d29f3c"/><path d="M2.6 6.3v2.4h-1M5.6 6.3h-1.4v1.2h1.4v1.2H4.2" stroke="#ecd9a4" stroke-width=".8" fill="none"/></svg>
<div class="a" style="left:622.4px;top:431.62px;font-size:8px;line-height:13.34px;color:#bbbbbb">index.js</div>
<svg class="a" style="left:586.7px;top:448.36px" width="7" height="5" viewBox="0 0 7 5"><path d="M.6 .8L3.5 3.8L6.4 .8" fill="none" stroke="#9a9da0" stroke-width="1"/></svg>
<svg class="a" style="left:598.4px;top:447.06px" width="10" height="8" viewBox="0 0 10 8"><path d="M0 0H3.8L4.8 1.1H10V7.2H0Z" fill="#9ca7ae"/></svg>
<div class="a" style="left:610.5px;top:444.96px;font-size:8px;line-height:13.34px;color:#bbbbbb">services</div>
<svg class="a" style="left:611.0px;top:458.9px" width="10" height="10" viewBox="0 0 10 10"><path d="M3.6 0H8.6V4.9H2.2V1.4Z" fill="#a4abb2"/><path d="M3.4 2.6H7.6" stroke="#5b6167" stroke-width=".7"/><rect x="0" y="5.3" width="10" height="4.7" fill="#d29f3c"/><path d="M2.6 6.3v2.4h-1M5.6 6.3h-1.4v1.2h1.4v1.2H4.2" stroke="#ecd9a4" stroke-width=".8" fill="none"/></svg>
<div class="a" style="left:622.4px;top:458.3px;font-size:8px;line-height:13.34px;color:#bbbbbb">bookstore-service.js</div>
<svg class="a" style="left:586.7px;top:475.04px" width="7" height="5" viewBox="0 0 7 5"><path d="M.6 .8L3.5 3.8L6.4 .8" fill="none" stroke="#9a9da0" stroke-width="1"/></svg>
<svg class="a" style="left:598.4px;top:473.74px" width="10" height="8" viewBox="0 0 10 8"><path d="M0 0H3.8L4.8 1.1H10V7.2H0Z" fill="#9ca7ae"/></svg>
<div class="a" style="left:610.5px;top:471.64px;font-size:8px;line-height:13.34px;color:#bbbbbb">utils</div>
<svg class="a" style="left:611.0px;top:485.58px" width="10" height="10" viewBox="0 0 10 10"><path d="M3.6 0H8.6V4.9H2.2V1.4Z" fill="#a4abb2"/><path d="M3.4 2.6H7.6" stroke="#5b6167" stroke-width=".7"/><rect x="0" y="5.3" width="10" height="4.7" fill="#d29f3c"/><path d="M2.6 6.3v2.4h-1M5.6 6.3h-1.4v1.2h1.4v1.2H4.2" stroke="#ecd9a4" stroke-width=".8" fill="none"/></svg>
<div class="a" style="left:622.4px;top:484.98px;font-size:8px;line-height:13.34px;color:#bbbbbb">compose.js</div>
<svg class="a" style="left:611.0px;top:498.92px" width="10" height="10" viewBox="0 0 10 10"><path d="M3.6 0H8.6V4.9H2.2V1.4Z" fill="#a4abb2"/><path d="M3.4 2.6H7.6" stroke="#5b6167" stroke-width=".7"/><rect x="0" y="5.3" width="10" height="4.7" fill="#d29f3c"/><path d="M2.6 6.3v2.4h-1M5.6 6.3h-1.4v1.2h1.4v1.2H4.2" stroke="#ecd9a4" stroke-width=".8" fill="none"/></svg>
<div class="a" style="left:622.4px;top:498.32px;font-size:8px;line-height:13.34px;color:#bbbbbb">index.js</div>
<svg class="a" style="left:599.1px;top:512.26px" width="10" height="10" viewBox="0 0 10 10"><path d="M3.6 0H8.6V4.9H2.2V1.4Z" fill="#a4abb2"/><path d="M3.4 2.6H7.6" stroke="#5b6167" stroke-width=".7"/><rect x="0" y="5.3" width="10" height="4.7" fill="#d29f3c"/><path d="M2.6 6.3v2.4h-1M5.6 6.3h-1.4v1.2h1.4v1.2H4.2" stroke="#ecd9a4" stroke-width=".8" fill="none"/></svg>
<div class="a" style="left:610.5px;top:511.66px;font-size:8px;line-height:13.34px;color:#bbbbbb">App.js</div>
<svg class="a" style="left:599.1px;top:525.6px" width="10" height="10" viewBox="0 0 10 10"><path d="M3.6 0H8.6V4.9H2.2V1.4Z" fill="#a4abb2"/><path d="M3.4 2.6H7.6" stroke="#5b6167" stroke-width=".7"/><rect x="0" y="5.3" width="10" height="4.7" fill="#d29f3c"/><path d="M2.6 6.3v2.4h-1M5.6 6.3h-1.4v1.2h1.4v1.2H4.2" stroke="#ecd9a4" stroke-width=".8" fill="none"/></svg>
<div class="a" style="left:610.5px;top:525.0px;font-size:8px;line-height:13.34px;color:#bbbbbb">index.js</div>
<svg class="a" style="left:599.1px;top:538.94px" width="10" height="10" viewBox="0 0 10 10"><path d="M3.6 0H8.6V4.9H2.2V1.4Z" fill="#a4abb2"/><path d="M3.4 2.6H7.6" stroke="#5b6167" stroke-width=".7"/><rect x="0" y="5.3" width="10" height="4.7" fill="#d29f3c"/><path d="M2.6 6.3v2.4h-1M5.6 6.3h-1.4v1.2h1.4v1.2H4.2" stroke="#ecd9a4" stroke-width=".8" fill="none"/></svg>
<div class="a" style="left:610.5px;top:538.34px;font-size:8px;line-height:13.34px;color:#bbbbbb">store.js</div>
<svg class="a" style="left:588.4px;top:552.88px" width="9" height="10" viewBox="0 0 9 10"><path d="M0 0H5.5L8 2.5V9.5H0Z" fill="#9ea5ab"/><path d="M1.5 2H4.5M1.5 3.5H6" stroke="#6b7075" stroke-width=".6"/><circle cx="4.6" cy="6.6" r="2.1" fill="none" stroke="#50555a" stroke-width=".9"/></svg>
<div class="a" style="left:598.6px;top:551.68px;font-size:8px;line-height:13.34px;color:#bbbbbb">.gitignore</div>
<svg class="a" style="left:588.4px;top:566.22px" width="9" height="10" viewBox="0 0 9 10"><path d="M0 0H5.5L8 2.5V9.5H0Z" fill="#9ea5ab"/><path d="M1.5 2H4.5M1.5 3.5H6" stroke="#6b7075" stroke-width=".6"/><circle cx="4.6" cy="6.6" r="2.1" fill="none" stroke="#50555a" stroke-width=".9"/></svg>
<div class="a" style="left:598.6px;top:565.02px;font-size:8px;line-height:13.34px;color:#bbbbbb">package.json</div>
<svg class="a" style="left:588.4px;top:579.56px" width="9" height="10" viewBox="0 0 9 10"><path d="M0 0H5.5L8 2.5V9.5H0Z" fill="#9ea5ab"/><path d="M1.5 2H4.5M1.5 3.5H6" stroke="#6b7075" stroke-width=".6"/><circle cx="4.6" cy="6.6" r="2.1" fill="none" stroke="#50555a" stroke-width=".9"/></svg>
<div class="a" style="left:598.6px;top:578.36px;font-size:8px;line-height:13.34px;color:#bbbbbb">package-lock.json</div>
<svg class="a" style="left:563.9px;top:594.1px" width="5" height="7" viewBox="0 0 5 7"><path d="M.8 .6L3.8 3.5L.8 6.4" fill="none" stroke="#9a9da0" stroke-width="1"/></svg>
<svg class="a" style="left:574px;top:592.6px" width="10" height="10" viewBox="0 0 10 10"><path d="M1 1v8M3.5 1v8" stroke="#62b543" stroke-width="1.4"/><path d="M6 1v8M8.5 1v8" stroke="#40b6e0" stroke-width="1.4"/></svg>
<div class="a" style="left:586.7px;top:591.7px;font-size:8px;line-height:13.34px;color:#bbbbbb">External Libraries</div>
<svg class="a" style="left:574px;top:604.94px" width="12" height="12" viewBox="0 0 12 12"><path d="M.5 .5H7V6H.5Z" fill="#9aa7b0"/><circle cx="7.5" cy="7.5" r="4" fill="#40b6e0"/><path d="M7.5 5.5v2.2h1.6" stroke="#2b2b2b" stroke-width=".8" fill="none"/></svg>
<div class="a" style="left:586.7px;top:605.04px;font-size:8px;line-height:13.34px;color:#bbbbbb">Scratches and Consoles</div></div>
<div class="a" style="left:1275px;top:0;width:5px;height:693px;background:#e3e3e3"></div>
<div class="a" style="left:1275px;top:0;width:5px;height:47px;background:#0d0d0d"></div>
<!-- taskbar -->
<div class="a" style="left:0;top:693px;width:1280px;height:27px;background:linear-gradient(to right,#3e3226 0px,#42362a 300px,#3f3228 620px,#48352a 760px,#4b372b 830px,#4a4440 890px,#4a4947 1000px,#474644 1280px)"></div>
<svg class="a" style="left:10px;top:701px" width="12" height="12" viewBox="0 0 12 12"><path d="M0 1.7L5 1V5.6H0ZM5.8 .9L12 0V5.6H5.8ZM0 6.4H5V11L0 10.3ZM5.8 6.4H12V12L5.8 11.1Z" fill="#fff"/></svg>
<div class="a" style="left:32px;top:693px;width:229px;height:27px;background:#f0f0f0;border-top:1px solid #c9c9c9"></div>
<svg class="a" style="left:39px;top:700px" width="12" height="13" viewBox="0 0 12 13"><circle cx="7" cy="5" r="4" fill="none" stroke="#333" stroke-width="1.1"/><path d="M4.2 7.9L.8 11.8" stroke="#333" stroke-width="1.3"/></svg>
<div class="a" style="left:59px;top:700.3px;font-size:9.8px;line-height:13px;color:#3d3d3d">Введите здесь текст для поиска</div>
<svg class="a" style="left:271.5px;top:701px" width="12" height="11" viewBox="0 0 12 11"><rect x="1" y="2.5" width="7" height="5" fill="none" stroke="#e8e0d8" stroke-width="1.3"/><path d="M1 .6H8M1 10.2H8M.6 .6V10.4M8.4 .6V10.4" stroke="#e8e0d8" stroke-width="1"/><path d="M10.8 3.5V10.5" stroke="#e8e0d8" stroke-width="1.3"/><circle cx="10.8" cy="1.3" r=".9" fill="#e8e0d8"/></svg>
<!-- chrome -->
<svg class="a" style="left:303.5px;top:699px" width="16" height="16" viewBox="0 0 16 16"><circle cx="8" cy="8" r="7.6" fill="#db4437"/><path d="M8 8L1.4 4.2A7.6 7.6 0 0 0 4.2 14.6Z" fill="#0f9d58"/><path d="M8 8L4.2 14.6A7.6 7.6 0 0 0 15.6 8L14.6 4.2Z" fill="#f4c20d"/><path d="M8 8H15.6A7.6 7.6 0 0 0 14.6 4.2Z" fill="#f4c20d"/><circle cx="8" cy="8" r="3.6" fill="#fff"/><circle cx="8" cy="8" r="2.8" fill="#4285f4"/></svg>
<!-- floppy -->
<svg class="a" style="left:335.5px;top:698.5px" width="16" height="16" viewBox="0 0 16 16"><path d="M0 0H14L16 2V16H0Z" fill="#2a5fd0"/><rect x="4" y="1" width="8" height="4" fill="#e6e6e6"/><rect x="9" y="1.6" width="1.8" height="2.8" fill="#2a5fd0"/><rect x="2" y="7.5" width="12" height="8" fill="#f3e6e6"/><path d="M3 9.3H13M3 11.3H13M3 13.3H9" stroke="#d05a5a" stroke-width=".9"/></svg>
<!-- phpstorm active -->
<div class="a" style="left:360.5px;top:693px;width:32px;height:27px;background:#5e5248"></div>
<svg class="a" style="left:368px;top:698.5px" width="16" height="16" viewBox="0 0 16 16"><circle cx="8" cy="8" r="7.8" fill="#b345f1"/><rect x="3.2" y="3.2" width="9.6" height="9.6" fill="#000"/><text x="4" y="8.3" font-family="Liberation Sans" font-weight="bold" font-size="5" fill="#fff">PS</text><rect x="4" y="10.4" width="3.2" height=".8" fill="#fff"/></svg>
<!-- app4 -->
<svg class="a" style="left:401.5px;top:698.5px" width="16" height="16" viewBox="0 0 16 16"><rect width="16" height="16" rx="1" fill="#05080c"/><path d="M8 2L13.5 12H2.5Z M5 8L11 8 M8 2L6 12 M8 2L10 12" fill="none" stroke="#1aa3e8" stroke-width="1.1"/></svg>
<!-- vs-like active yellow -->
<div class="a" style="left:428.8px;top:693px;width:26px;height:27px;background:#7a6b2c"></div>
<div class="a" style="left:428.8px;top:718px;width:26px;height:2px;background:#f3d400"></div>
<svg class="a" style="left:434px;top:698.5px" width="16" height="16" viewBox="0 0 16 16"><rect width="16" height="16" fill="#7b43e8"/><path d="M3.5 4L8 8L3.5 12ZM12.5 4L8 8L12.5 12Z" fill="#f2eefc"/></svg>
<!-- terminal -->
<svg class="a" style="left:467px;top:700px" width="15" height="13" viewBox="0 0 15 13"><rect x=".5" y=".5" width="14" height="12" fill="#000" stroke="#8a8a8a" stroke-width="1"/><rect x="1" y="1" width="13" height="1.8" fill="#bdbdbd"/><path d="M2.5 4.5L4.2 5.6L2.5 6.7M5.2 6.7H8" stroke="#e0e0e0" stroke-width=".7" fill="none"/></svg>
<!-- bow -->
<svg class="a" style="left:500px;top:698.5px" width="14" height="16" viewBox="0 0 14 16"><path d="M3 1C0.5 5 1.5 11 5.5 14.5C8 15.5 11 15 13 14" fill="none" stroke="#e8c27a" stroke-width="2"/><path d="M3 1C2 5 3 10 6 13" fill="none" stroke="#8ecdf0" stroke-width="1.5"/><path d="M3.5 2L12.5 13.5" stroke="#6a4a2a" stroke-width=".6"/></svg>
<!-- shield -->
<svg class="a" style="left:533px;top:698.5px" width="13" height="16" viewBox="0 0 13 16"><path d="M6.5 .5L12.5 2.5V8C12.5 12 9 14.5 6.5 15.5C4 14.5 .5 12 .5 8V2.5Z" fill="#d8b23a"/><path d="M6.5 2.5L10.5 4V8C10.5 11 8.5 12.8 6.5 13.5C4.5 12.8 2.5 11 2.5 8V4Z" fill="#2f6a4a"/><circle cx="6.5" cy="7.8" r="2" fill="#e89a2a"/></svg>
<!-- telegram -->
<svg class="a" style="left:564.5px;top:698.5px" width="18" height="18" viewBox="0 0 18 18"><circle cx="7.8" cy="7.8" r="7.6" fill="#37a6de"/><path d="M3.5 7.6L11.8 4.4L10.4 11.4L7.6 9.4L6.3 10.8V8.6L10.4 5.5L5.4 8.4Z" fill="#fff"/><rect x="6.5" y="9.8" width="11" height="7.4" rx="1" fill="#e5332a"/><text x="8.3" y="15.6" font-family="Liberation Sans" font-size="6" fill="#fff">49</text></svg>
<!-- running indicators -->
<div class="a" style="left:298.5px;top:718.3px;width:26px;height:1.7px;background:#8fc2ec"></div>
<div class="a" style="left:330.5px;top:718.3px;width:26.5px;height:1.7px;background:#8fc2ec"></div>
<div class="a" style="left:361px;top:718.3px;width:31.5px;height:1.7px;background:#8fc2ec"></div>
<div class="a" style="left:394.5px;top:718.3px;width:28px;height:1.7px;background:#8fc2ec"></div>
<div class="a" style="left:461px;top:718.3px;width:26.5px;height:1.7px;background:#8fc2ec"></div>
<div class="a" style="left:493.8px;top:718.3px;width:26.5px;height:1.7px;background:#8fc2ec"></div>
<div class="a" style="left:527px;top:718.3px;width:26px;height:1.7px;background:#8fc2ec"></div>
<div class="a" style="left:559px;top:718.3px;width:26px;height:1.7px;background:#8fc2ec"></div>
<!-- tray -->
<svg class="a" style="left:1132px;top:702px" width="10" height="7" viewBox="0 0 10 7"><path d="M.7 6L5 1.5L9.3 6" fill="none" stroke="#eee" stroke-width="1.1"/></svg>
<svg class="a" style="left:1147px;top:702px" width="12" height="10" viewBox="0 0 12 10"><rect x="2.5" y=".6" width="9" height="6.5" fill="none" stroke="#e8e8e8" stroke-width="1"/><path d="M5 9.4H9M7 7.2V9.4" stroke="#e8e8e8" stroke-width="1"/><rect x="0" y="3.5" width="4" height="5" fill="#484745" stroke="#e8e8e8" stroke-width=".8"/></svg>
<svg class="a" style="left:1162px;top:701.5px" width="12" height="10" viewBox="0 0 12 10"><path d="M.6 3.3H2.8L5.8 .8V9.2L2.8 6.7H.6Z" fill="none" stroke="#e8e8e8" stroke-width="1"/><path d="M7.8 3.2Q8.8 5 7.8 6.8M9.8 1.8Q11.6 5 9.8 8.2" fill="none" stroke="#e8e8e8" stroke-width=".9"/></svg>
<div class="a" style="left:1181px;top:700.5px;font-size:7.8px;line-height:12px;color:#f0f0f0">РУС</div>
<div class="a" style="left:1212.5px;top:694.5px;font-size:7.6px;line-height:12px;color:#f0f0f0">20:08</div>
<div class="a" style="left:1204.5px;top:706px;font-size:7.3px;line-height:12px;color:#f0f0f0">12.10.2020</div>
<svg class="a" style="left:1252px;top:701px" width="12" height="12" viewBox="0 0 12 12"><path d="M.6 .6H11.4V8.4H7.5L5.8 10.8L4.2 8.4H.6Z" fill="none" stroke="#eee" stroke-width="1"/></svg>
</body></html>
